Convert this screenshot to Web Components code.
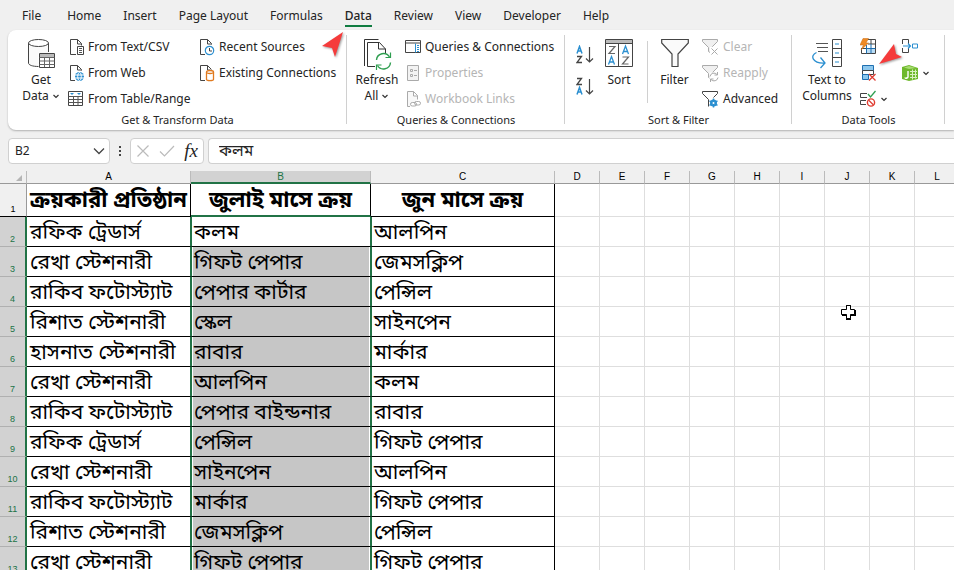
<!DOCTYPE html>
<html lang="en">
<head>
<meta charset="UTF-8">
<meta name="viewport" content="width=device-width, initial-scale=1.0">
<title>Book1 - Excel</title>
<style>
  :root {
    --chrome: #f0f0f0;
    --green: #217346;
    --ink: #242424;
    --muted: #b5b5b5;
    --line: #d0d0d0;
  }

  body {
    margin: 0;
    height: 100vh;
    overflow: hidden;
    background: var(--chrome);
    color: var(--ink);
    font: 12px/16px "Noto Sans", "Noto Sans Bengali", sans-serif;
  }
</style>
</head>
<body>
<excel-window></excel-window>

<script>
const ICONS = {
  "get-data": [28, 32, `
    <path d="M2 6v19c2 2 5 3 9 3V15h10V6z" fill="#fafafa"/>
    <path d="M1.500 5v20c0 2 4 3.500 10 3.500M21.500 5v9" fill="none" stroke="#444"/>
    <ellipse cx="11.500" cy="5" rx="10" ry="3.500" fill="#fff" stroke="#444"/>
    <path d="M12.500 15.500h15v14h-15z" fill="#fff" stroke="#444"/>
    <path d="M13 16h14v3H13z" fill="#bbb"/>
    <path d="M12.500 19.500h15M12.500 23h15M12.500 26.500h15M17.500 19v10M22.500 19v10" stroke="#666" fill="none"/>`],
  "text-csv": [16, 18, `
    <path d="M8 16.500H2.500v-15h7l4 4v2M9.500 1.500v4.500h4" fill="none" stroke="#444"/>
    <path d="M9.500 8.500h6v8h-6z" fill="#fff" stroke="#444"/>
    <path d="M11 10.500h3M11 12.500h3M11 14.500h3" stroke="#555"/>`],
  "web": [16, 18, `
    <path d="M7 16.500H2.500v-15h7l4 4v1M9.500 1.500v4.500h4" fill="none" stroke="#444"/>
    <circle cx="11.500" cy="12.500" r="4.500" fill="#2b8fd0"/>
    <path d="M7 11h9M7 14h9" stroke="#fff"/>
    <ellipse cx="11.500" cy="12.500" rx="1.800" ry="4" fill="none" stroke="#fff"/>`],
  "table": [16, 18, `
    <path d="M.500 1.500h14v14H.500z" fill="#fff" stroke="#444"/>
    <path d="M.500 6.500h14M.500 9.500h14M.500 12.500h14M5.500 6v9M10 6v9" stroke="#555" fill="none"/>
    <path d="M2 3h4L4 5zM9 3h4l-2 2z" fill="#2b8fd0"/>`],
  "recent": [16, 18, `
    <path d="M6 16.500H1.500v-15h7l4 4v1M8.500 1.500v4.500h4" fill="none" stroke="#444"/>
    <circle cx="10.500" cy="12.500" r="4.200" fill="#fff" stroke="#2b8fd0" stroke-width="1.200"/>
    <path d="M10.500 10v3h2.500" fill="none" stroke="#444"/>`],
  "existing": [16, 18, `
    <path d="M6 16.500H1.500v-15h7l4 4M8.500 1.500v4.500h3" fill="none" stroke="#444"/>
    <path d="M7.500 8v7.500c0 1.500 7 1.500 7 0V8" fill="#fff" stroke="#e07a1f" stroke-width="1.300"/>
    <ellipse cx="11" cy="8" rx="3.500" ry="1.500" fill="#fff" stroke="#e07a1f" stroke-width="1.300"/>`],
  "refresh": [30, 32, `
    <path d="M2.500 28V1.500h14" fill="none" stroke="#333"/>
    <path d="M13 28.500H5.500v-24h12l6 6.500v4M16.500 4.500V11h7" fill="none" stroke="#333"/>
    <path d="M14.500 22a7 7 0 0 1 13-3M28.500 24.500a7 7 0 0 1-13 3" fill="none" stroke="#2e9e50" stroke-width="1.400"/>
    <path d="M28.500 14.500v5h-5M14.500 32v-5h5" fill="none" stroke="#2e9e50" stroke-width="1.200"/>`],
  "pane": [16, 18, `
    <path d="M.500 2.500h15v12H.500z" fill="#fff" stroke="#444"/>
    <path d="M.500 5h15" stroke="#444"/>
    <path d="M10.500 5.500v9" stroke="#2b8fd0"/>
    <path d="M12 7.500h2M12 9.500h2M12 11.500h2M12 13.500h2" stroke="#2b8fd0"/>`],
  "props": [16, 18, `
    <path d="M2.500 1.500h11v15h-11z" fill="#f3f3f3" stroke="#aaa"/>
    <path d="M5.500 5.500h2v2h-2zM5.500 10.500h2v2h-2zM9 6.500h3M9 11.500h3" fill="none" stroke="#aaa"/>`],
  "links": [16, 18, `
    <path d="M5 16.500H2.500v-15h6l4 4v4M8.500 1.500v4.500h4" fill="#f8f8f8" stroke="#aaa"/>
    <rect x="5.500" y="12.500" width="6" height="3.500" rx="1.750" fill="#fff" stroke="#aaa"/>
    <rect x="9.500" y="11.500" width="6" height="3.500" rx="1.750" fill="none" stroke="#aaa"/>`],
  "asc": [18, 20, `
    <path d="M1 8.500l2.500-7 2.500 7M1.800 6h3.400" fill="none" stroke="#2b8fd0" stroke-width="1.500"/>
    <path d="M1 11.500h4.500L1 17.500h5" fill="none" stroke="#444" stroke-width="1.300"/>
    <path d="M13.500 2v15M10 13.500l3.500 3.500 3.500-3.500" fill="none" stroke="#444" stroke-width="1.200"/>`],
  "desc": [18, 20, `
    <path d="M1 1.500h4.500L1 7.500h5" fill="none" stroke="#444" stroke-width="1.300"/>
    <path d="M1 17.500l2.500-7 2.500 7M1.800 15h3.400" fill="none" stroke="#2b8fd0" stroke-width="1.500"/>
    <path d="M13.500 2v15M10 13.500l3.500 3.500 3.500-3.500" fill="none" stroke="#444" stroke-width="1.200"/>`],
  "sort": [28, 32, `
    <path d="M.500 1.500h27v27H.500z" fill="#fff" stroke="#444"/>
    <path d="M1 2h26v3.500H1z" fill="#bbb"/>
    <path d="M.500 5.500h27M13.500 6v22" stroke="#444"/>
    <path d="M4 8.500h6l-6 7h6M17.500 19h6l-6 7h6" fill="none" stroke="#666" stroke-width="1.200"/>
    <path d="M17.500 16l3-8 3 8M18.500 13.500h4M3.500 26.500l3-8 3 8M4.500 24h4" fill="none" stroke="#2b8fd0" stroke-width="1.300"/>`],
  "filter": [28, 32, `
    <path d="M.700 1.500h26.600V5L17 16v12.500h-6V16L.700 5z" fill="#fafafa" stroke="#444" stroke-width="1.200"/>`],
  "clear": [18, 18, `
    <path d="M1.500 1.500h15v2l-5 5-1 2v5l-3-2V9.500l-6-6z" fill="#f0f0f0" stroke="#aaa"/>
    <path d="M9 9h8v8H9z" fill="#fff"/><path d="M10.500 10.500l6 6M16.500 10.500l-6 6" stroke="#aaa"/>`],
  "reapply": [18, 18, `
    <path d="M1.500 1.500h15v2l-5 5-1 2v5l-3-2V9.500l-6-6z" fill="#f0f0f0" stroke="#aaa"/>
    <path d="M8.500 8.500h9v9h-9z" fill="#fff"/>
    <path d="M9 12.500a4 4 0 0 1 7-2M17 13.500a4 4 0 0 1-7 2M16.500 8v3h-3M9.500 18v-3h3" fill="none" stroke="#aaa"/>`],
  "advanced": [18, 18, `
    <path d="M7.500 16.500v-7l-6-6v-2h15v2l-4 4" fill="#fff" stroke="#444"/>
    <g fill="none" stroke="#2b8fd0"><circle cx="12.500" cy="13" r="2.500" stroke-width="2"/>
    <path stroke-width="1.500" d="M12.500 8.500v9M8.500 10.800l8 4.500M16.500 10.800l-8 4.500"/></g>
    <circle cx="12.500" cy="13" r="1" fill="#fff"/>`],
  "columns": [30, 32, `
    <path d="M4 5.500h12M5 9.500h11M6 13.500h10" stroke="#555"/>
    <path d="M20.500 1.500h9v27h-9zM20.500 10.500h9M20.500 19.500h9" fill="#fff" stroke="#444"/>
    <path d="M23 6h4M23 15h4M23 24h4" stroke="#2b8fd0" stroke-width="1.200"/>
    <path d="M4.500 14.500c-7 3-4 11 8 10.500M8.500 19.500l4.500 5.500-4.500 5" fill="none" stroke="#2b8fd0" stroke-width="1.300"/>`],
  "flash-fill": [16, 18, `
    <path d="M7 11h8v4H7z" fill="#b9dcf5"/>
    <path d="M8 1.500h7.500v14H1.500V10M1.500 10.500h5M8 6h7.500M11 1.500v4.500" fill="none" stroke="#444"/>
    <path d="M6.500 10.500h9M6.500 7v8.500M11 6v9.500" fill="none" stroke="#1f6fb0"/>
    <path d="M3 .500h5.500L6 5h2.500L1 12 3.500 7H0z" fill="#f08a24" stroke="#c66a10" stroke-width=".500"/>`],
  "remove-dup": [16, 18, `
    <path d="M2.500 1.500h11v5h-11z" fill="#8ec8ee" stroke="#1f6fb0"/>
    <path d="M2.500 6.500h11v4h-11z" fill="#fff" stroke="#444"/>
    <path d="M2.500 10.500h6v5h-6z" fill="#8ec8ee" stroke="#1f6fb0"/>
    <path d="M9 11h7v6H9z" fill="#fff"/>
    <path d="M9 10l6.500 6.500M15.500 10L9 16.500" stroke="#e03c31" stroke-width="1.300"/>`],
  "validation": [16, 18, `
    <path d="M7 3.500H.500v4H7M6 10.500H.500v4H6" fill="none" stroke="#444"/>
    <path d="M8 4l2.500 3 5-6" fill="none" stroke="#2e9e50" stroke-width="1.300"/>
    <circle cx="11" cy="12.500" r="3.600" fill="#fff" stroke="#e03c31" stroke-width="1.400"/>
    <path d="M8.500 10l5 5" stroke="#e03c31" stroke-width="1.200"/>`],
  "consolidate": [16, 18, `
    <path d="M.500 6V1.500h6V6M.500 10v4.500h6V10" fill="none" stroke="#444"/>
    <path d="M1 8h7M6 5.500L8.500 8 6 10.500" fill="none" stroke="#2b8fd0" stroke-width="1.200"/>
    <path d="M10.500 6h5v4h-5z" fill="#fff" stroke="#2b8fd0"/>`],
  "model": [16, 18, `
    <path d="M0 3l7-2 9 3v11l-9 2-7-2z" fill="#6fb92c"/>
    <path d="M2 3.500L7 2l7 2-7 1z" fill="#a9dc74"/>
    <path d="M6 7v6c0 1.500-3 1.500-3 .500" fill="none" stroke="#fff" stroke-width="1.400"/>
    <path d="M8 7.500h7M8 10.500h7M8 13.500h7M10.500 5.500v10M13.500 5.500v9" stroke="#d8f0c0"/>`],
  "chevron": [8, 8, `<path d="M1.500 3L4 5.500 6.500 3" fill="none" stroke="#333" stroke-width="1.200"/>`],
  "chevron-wide": [12, 8, `<path d="M1 1.500l5 5 5-5" fill="none" stroke="#444" stroke-width="1.300"/>`],
  "cancel": [14, 14, `<path d="M1.500 1.500l11 11M12.500 1.500l-11 11" stroke="#bbb" stroke-width="1.200"/>`],
  "enter": [16, 14, `<path d="M1 7.500l4.500 4.500L15 2" fill="none" stroke="#bbb" stroke-width="1.200"/>`],
  "dots": [4, 14, `<path d="M1 2h2v2H1zM1 6h2v2H1zM1 10h2v2H1z" fill="#444"/>`],
};

class UiIcon extends HTMLElement {
  constructor() {
    super();
    this.attachShadow({ mode: "open" });
  }

  connectedCallback() {
    const [width, height, shapes] = ICONS[this.getAttribute("name")];
    this.shadowRoot.innerHTML = /* html */`
    <style>
      :host { display: inline-block; flex: none; }
      svg { display: block; }
    </style>
    <svg width="${width}" height="${height}" viewBox="0 0 ${width} ${height}" aria-hidden="true">${shapes}</svg>`;
  }
}

// size="large" stacks the icon over its label, the default is a one-line row
class RibbonButton extends HTMLElement {
  constructor() {
    super();
    this.attachShadow({ mode: "open" });
  }

  static get styles() {
    return /* css */`
      :host { display: block; }

      button {
        display: flex;
        align-items: center;
        gap: 4px;
        height: 26px;
        padding: 0;
        border: 0;
        background: none;
        color: inherit;
        font: inherit;
        white-space: nowrap;
      }

      button:disabled { color: var(--muted); }

      :host([size="large"]) button {
        flex-direction: column;
        justify-content: flex-start;
        gap: 2px;
        width: 100%;
        height: auto;
        padding-top: 4px;
      }
    `;
  }

  connectedCallback() {
    const off = this.hasAttribute("disabled") ? "disabled" : "";
    const label = this.getAttribute("label");
    this.shadowRoot.innerHTML = /* html */`
    <style>${RibbonButton.styles}</style>
    <button type="button" ${off} ${label ? `aria-label="${label}"` : ""}>
      <ui-icon name="${this.getAttribute("icon")}"></ui-icon>
      <span><slot></slot></span>
    </button>`;
  }
}

class RibbonGroup extends HTMLElement {
  constructor() {
    super();
    this.attachShadow({ mode: "open" });
  }

  connectedCallback() {
    this.shadowRoot.innerHTML = /* html */`
    <style>
      :host {
        display: flex;
        flex-direction: column;
        flex: none;
        box-sizing: border-box;
        position: relative;
        padding-top: 4px;
      }

      :host::after {
        content: "";
        position: absolute;
        right: 0;
        top: 5px;
        bottom: 6px;
        width: 1px;
        background: var(--line);
      }

      .body { display: flex; height: 78px; }
      .caption { font-size: 11px; text-align: center; }
    </style>
    <div class="body"><slot></slot></div>
    <div class="caption">${this.getAttribute("caption")}</div>`;
  }
}

class RibbonTabs extends HTMLElement {
  constructor() {
    super();
    this.attachShadow({ mode: "open" });
  }

  handleEvent (event) {
    const tab = event.composedPath()[0].closest("button");
    if (!tab) return;
    this.shadowRoot.querySelector(".active").classList.remove("active");
    tab.classList.add("active");
  }

  connectedCallback() {
    const tabs = ["File", "Home", "Insert", "Page Layout", "Formulas", "Data", "Review", "View", "Developer", "Help"];
    this.shadowRoot.innerHTML = /* html */`
    <style>
      :host { display: block; }

      nav {
        display: flex;
        gap: 22px;
        height: 30px;
        padding-left: 22px;
      }

      button {
        height: 27px;
        padding: 6px 0 0;
        border: 0;
        border-bottom: 2px solid transparent;
        background: none;
        color: inherit;
        font: inherit;
        box-sizing: border-box;
      }

      button:first-child { margin-right: 4px; }
      .active { border-color: #107c41; font-weight: 500; }
    </style>
    <nav>${tabs.map(t => `<button type="button" class="${t === "Data" ? "active" : ""}">${t}</button>`).join("")}</nav>`;
    this.addEventListener("click", this);
  }
}

class DataRibbon extends HTMLElement {
  constructor() {
    super();
    this.attachShadow({ mode: "open" });
  }

  static get styles() {
    return /* css */`
      :host {
        display: flex;
        position: relative;
        margin-left: 8px;
        height: 100px;
        background: #fff;
        border-radius: 8px 0 0 8px;
        box-shadow: 0 1px 2px #0004;
      }

      .get { width: 339px; }
      .queries { width: 218px; }
      .sorting { width: 227px; }
      .tools { width: 153px; }
      .get-data { width: 42px; margin: 0 6px 0 12px; }
      .first { width: 131px; }
      .refresh { width: 52px; margin: 0 2px 0 4px; }
      .order { display: flex; flex-direction: column; gap: 6px; padding: 8px 3px 0 11px; }
      .sort { width: 36px; }
      .filter { width: 53px; }
      .split { width: 1px; margin: 7px 0 9px 10px; background: var(--line); }
      .to-columns { width: 60px; margin: 0 3px 0 5px; }
      .tool { width: 42px; }
      .arrow { position: absolute; overflow: visible; filter: drop-shadow(1px 1px 1px #0006); }
      .arrow.tab { left: 314px; top: 2px; }
      .arrow.dup { left: 871px; top: 14px; }
    `;
  }

  connectedCallback() {
    this.shadowRoot.innerHTML = /* html */`
    <style>${DataRibbon.styles}</style>
    <ribbon-group class="get" caption="Get &amp; Transform Data">
      <ribbon-button class="get-data" size="large" icon="get-data">Get<br>Data <ui-icon name="chevron"></ui-icon></ribbon-button>
      <div class="first">
        <ribbon-button icon="text-csv">From Text/CSV</ribbon-button>
        <ribbon-button icon="web">From Web</ribbon-button>
        <ribbon-button icon="table">From Table/Range</ribbon-button>
      </div>
      <div>
        <ribbon-button icon="recent">Recent Sources</ribbon-button>
        <ribbon-button icon="existing">Existing Connections</ribbon-button>
      </div>
    </ribbon-group>
    <ribbon-group class="queries" caption="Queries &amp; Connections">
      <ribbon-button class="refresh" size="large" icon="refresh">Refresh<br>All <ui-icon name="chevron"></ui-icon></ribbon-button>
      <div>
        <ribbon-button icon="pane">Queries &amp; Connections</ribbon-button>
        <ribbon-button icon="props" disabled>Properties</ribbon-button>
        <ribbon-button icon="links" disabled>Workbook Links</ribbon-button>
      </div>
    </ribbon-group>
    <ribbon-group class="sorting" caption="Sort &amp; Filter">
      <div class="order">
        <ribbon-button icon="asc" label="Sort A to Z"></ribbon-button>
        <ribbon-button icon="desc" label="Sort Z to A"></ribbon-button>
      </div>
      <ribbon-button class="sort" size="large" icon="sort">Sort</ribbon-button>
      <div class="split"></div>
      <ribbon-button class="filter" size="large" icon="filter">Filter</ribbon-button>
      <div>
        <ribbon-button icon="clear" disabled>Clear</ribbon-button>
        <ribbon-button icon="reapply" disabled>Reapply</ribbon-button>
        <ribbon-button icon="advanced">Advanced</ribbon-button>
      </div>
    </ribbon-group>
    <ribbon-group class="tools" caption="Data Tools">
      <ribbon-button class="to-columns" size="large" icon="columns">Text to<br>Columns</ribbon-button>
      <div class="tool">
        <ribbon-button icon="flash-fill" label="Flash Fill"></ribbon-button>
        <ribbon-button icon="remove-dup" label="Remove Duplicates"></ribbon-button>
        <ribbon-button icon="validation" label="Data Validation"><ui-icon name="chevron"></ui-icon></ribbon-button>
      </div>
      <div>
        <ribbon-button icon="consolidate" label="Consolidate"></ribbon-button>
        <ribbon-button icon="model" label="Manage Data Model"><ui-icon name="chevron"></ui-icon></ribbon-button>
      </div>
    </ribbon-group>
    <svg class="arrow tab" width="22" height="26"><path d="M21 0L0 14l10 2 3 9z" fill="#f53b3b"/></svg>
    <svg class="arrow dup" width="24" height="21"><path d="M0 20L15 0l2 10 6 3z" fill="#f53b3b"/></svg>`;
  }
}

class FormulaBar extends HTMLElement {
  constructor() {
    super();
    this.attachShadow({ mode: "open" });
  }

  static get styles() {
    return /* css */`
      :host {
        display: flex;
        gap: 4px;
        padding: 8px 0 7px 8px;
      }

      .box {
        display: flex;
        align-items: center;
        box-sizing: border-box;
        height: 26px;
        background: #fff;
        border: 1px solid var(--line);
        border-radius: 4px;
      }

      input {
        flex: 1;
        min-width: 0;
        padding: 0;
        border: 0;
        outline: 0;
        background: none;
        color: inherit;
        font: inherit;
      }

      button {
        display: flex;
        padding: 0;
        border: 0;
        background: none;
        color: inherit;
      }

      .name { width: 102px; padding: 0 4px 0 6px; }
      .dots { align-self: center; margin: 0 4px; }
      .actions { width: 74px; justify-content: space-between; padding: 0 5px; }
      .fx { font: italic 19px/20px "Liberation Serif", serif; }
      .formula { flex: 1; padding: 0 0 2px 10px; border-right: 0; border-radius: 4px 0 0 4px; }
      .formula input { font-size: 16px; line-height: 22px; }
    `;
  }

  connectedCallback() {
    this.shadowRoot.innerHTML = /* html */`
    <style>${FormulaBar.styles}</style>
    <div class="box name">
      <input aria-label="Name Box" value="B2">
      <button type="button" aria-label="Open Name Box"><ui-icon name="chevron-wide"></ui-icon></button>
    </div>
    <ui-icon class="dots" name="dots"></ui-icon>
    <div class="box actions">
      <button type="button" aria-label="Cancel"><ui-icon name="cancel"></ui-icon></button>
      <button type="button" aria-label="Enter"><ui-icon name="enter"></ui-icon></button>
      <button type="button" class="fx">fx</button>
    </div>
    <div class="box formula"><input aria-label="Formula Bar" value="কলম"></div>`;
  }
}

const ROWS = [
  ["ক্রয়কারী প্রতিষ্ঠান", "জুলাই মাসে ক্রয়", "জুন মাসে ক্রয়"],
  ["রফিক ট্রেডার্স", "কলম", "আলপিন"],
  ["রেখা স্টেশনারী", "গিফট পেপার", "জেমসক্লিপ"],
  ["রাকিব ফটোস্ট্যাট", "পেপার কার্টার", "পেন্সিল"],
  ["রিশাত স্টেশনারী", "স্কে\u200Cল", "সাইনপেন"],
  ["হাসনাত স্টেশনারী", "রাবার", "মার্কার"],
  ["রেখা স্টেশনারী", "আলপিন", "কলম"],
  ["রাকিব ফটোস্ট্যাট", "পেপার বাইন্ডনার", "রাবার"],
  ["রফিক ট্রেডার্স", "পেন্সিল", "গিফট পেপার"],
  ["রেখা স্টেশনারী", "সাইনপেন", "আলপিন"],
  ["রাকিব ফটোস্ট্যাট", "মার্কার", "গিফট পেপার"],
  ["রিশাত স্টেশনারী", "জেমসক্লিপ", "পেন্সিল"],
  ["রেখা স্টেশনারী", "গিফট পেপার", "গিফট পেপার"],
];

class SheetGrid extends HTMLElement {
  constructor() {
    super();
    this.attachShadow({ mode: "open" });
  }

  static get styles() {
    return /* css */`
      :host {
        display: block;
        position: relative;
        flex: 1;
        min-height: 0;
        overflow: hidden;
        background: #fff;
      }

      table {
        table-layout: fixed;
        width: 960px;
        border-spacing: 0;
        color: #000;
      }

      col { width: 45px; }
      .c-num { width: 27px; }
      .c-a { width: 164px; }
      .c-b { width: 180px; }
      .c-c { width: 184px; }

      th, td {
        box-sizing: border-box;
        height: 30px;
        padding: 0;
        border: 0 solid #dedede;
        border-width: 0 1px 1px 0;
        overflow: hidden;
        white-space: nowrap;
      }

      thead th {
        height: 13px;
        padding-bottom: 1px;
        background: var(--chrome);
        border-color: #bbb;
        border-bottom-color: #999;
        font: 10px/11px "Liberation Sans", sans-serif;
      }

      thead th.on {
        padding-bottom: 0;
        background: #d2d2d2;
        border-bottom: 2px solid var(--green);
        color: var(--green);
      }

      thead svg { display: block; margin: 2px 4px 0 auto; }

      tbody th {
        padding-bottom: 2px;
        background: #d2d2d2;
        border-right: 2px solid var(--green);
        border-bottom-color: #b0b0b0;
        color: var(--green);
        font: 9px/10px "Liberation Sans", sans-serif;
        vertical-align: bottom;
      }

      td.data {
        padding: 0 0 2px 3px;
        border-color: #000;
        font-size: 21px;
        line-height: 26px;
      }

      tbody tr:first-child > * { height: 33px; }

      tbody tr:first-child th {
        background: var(--chrome);
        border-right: 1px solid #999;
        border-bottom-color: #000;
        color: #000;
      }

      tbody tr:first-child .data {
        padding: 0 0 4px;
        font-size: 22px;
        font-weight: bold;
        text-align: center;
      }

      tbody tr:first-child .b { border-bottom: 2px solid var(--green); }
      tr:not(:first-child) .a { border-right-color: var(--green); }
      tr:not(:first-child) .c { border-left: 1px solid var(--green); padding-left: 2px; }

      tr:not(:first-child) .b {
        padding-left: 2px;
        border-left: 1px solid var(--green);
        border-right-color: var(--green);
        background: #c6c6c6;
        box-shadow: inset 1px 0 #fff, inset -1px 0 #fff;
      }

      tbody tr:nth-child(2) .b { background: #fff; }

      .cursor { position: absolute; left: 840px; top: 133px; }
    `;
  }

  connectedCallback() {
    const letters = [..."ABCDEFGHIJKL"];
    const heads = letters.map(l => `<th class="${l === "B" ? "on" : ""}" scope="col">${l}</th>`).join("");
    const body = ROWS.map((row, i) => {
      const cells = letters.map((l, n) => n < 3 ? `<td class="data ${l.toLowerCase()}">${row[n]}</td>` : "<td></td>");
      return `<tr><th scope="row">${i + 1}</th>${cells.join("")}</tr>`;
    }).join("");

    this.shadowRoot.innerHTML = /* html */`
    <style>${SheetGrid.styles}</style>
    <table>
      <colgroup><col class="c-num"><col class="c-a"><col class="c-b"><col class="c-c"><col span="9"></colgroup>
      <thead><tr>
        <th><svg width="6" height="6"><path d="M6 0v6H0z" fill="#b5b5b5"/></svg></th>${heads}
      </tr></thead>
      <tbody lang="bn">${body}</tbody>
    </table>
    <svg class="cursor" width="17" height="17" viewBox="0 0 17 17">
      <path d="M6 1h5v5h5v6h-5v4H6v-4H2V6h4z" fill="#000"/>
      <path d="M6.500 1.500h4v4h4v5h-4v4h-4v-4h-5v-5h5z" fill="#fff" stroke="#000"/>
    </svg>`;
  }
}

class ExcelWindow extends HTMLElement {
  constructor() {
    super();
    this.attachShadow({ mode: "open" });
  }

  connectedCallback() {
    this.shadowRoot.innerHTML = /* html */`
    <style>
      :host {
        display: flex;
        flex-direction: column;
        height: 100%;
      }
    </style>
    <ribbon-tabs></ribbon-tabs>
    <data-ribbon></data-ribbon>
    <formula-bar></formula-bar>
    <sheet-grid></sheet-grid>`;
  }
}

customElements.define("ui-icon", UiIcon);
customElements.define("ribbon-button", RibbonButton);
customElements.define("ribbon-group", RibbonGroup);
customElements.define("ribbon-tabs", RibbonTabs);
customElements.define("data-ribbon", DataRibbon);
customElements.define("formula-bar", FormulaBar);
customElements.define("sheet-grid", SheetGrid);
customElements.define("excel-window", ExcelWindow);
</script>
</body>
</html>
